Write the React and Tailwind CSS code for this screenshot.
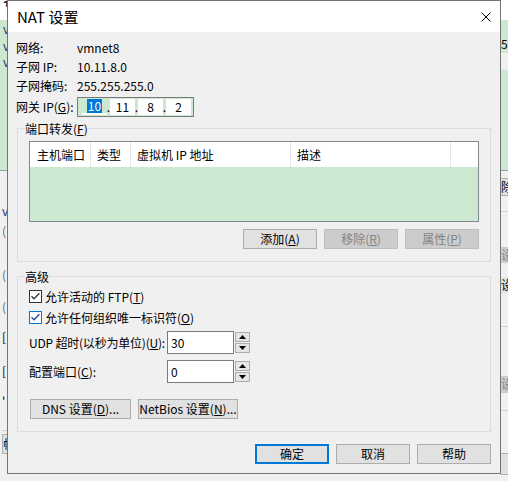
import React from "react";

function Btn({ children, className }) {
  return (
    <div className={"flex items-center justify-center h-[20px] text-[12px] leading-none whitespace-nowrap " + className}>
      {children}
    </div>
  );
}

function Check({ blue }) {
  return (
    <svg width="13" height="13" viewBox="0 0 13 13" className="shrink-0">
      <rect x="0.5" y="0.5" width="12" height="12" fill="white" stroke={blue ? "#0078d7" : "#333333"} />
      <path d="M2.5 6.2 L5 8.8 L10.4 3.3" fill="none" stroke={blue ? "#1b4f8a" : "#333333"} strokeWidth="1.3" />
    </svg>
  );
}

function Spin() {
  return (
    <div className="ml-[1px] flex flex-col gap-[1px] w-[15px]">
      <div className="h-[10px] bg-[#e5e5e5] border border-[#adadad] flex items-center justify-center">
        <svg width="7" height="4" viewBox="0 0 7 4"><path d="M0 4 L3.5 0 L7 4 Z" fill="#000" /></svg>
      </div>
      <div className="h-[10px] bg-[#e5e5e5] border border-[#adadad] flex items-center justify-center">
        <svg width="7" height="4" viewBox="0 0 7 4"><path d="M0 0 L7 0 L3.5 4 Z" fill="#000" /></svg>
      </div>
    </div>
  );
}

export default function App() {
  return (
    <div className="relative w-[508px] h-[481px] overflow-hidden bg-[#f0f0f0] text-black font-['Noto_Sans_CJK_SC',sans-serif] text-[12px]">
      {/* background window */}
      <div className="flex flex-col h-full">
        <div className="h-[20px] bg-white flex">
          <div className="w-[7px] overflow-hidden">
            <div className="pl-[3px] -mt-[7px] leading-[16px] whitespace-nowrap">名称</div>
          </div>
          <div className="flex-1"></div>
        </div>
        <div className="h-[150px] flex">
          <div className="w-[7px] overflow-hidden bg-[#cde8d0] pl-[3px] pt-[1px] flex flex-col leading-[16.5px] text-[#1a3a8a] whitespace-nowrap">
            <span>vm</span>
            <span>vm</span>
            <span>vm</span>
          </div>
          <div className="flex-1 bg-[#cde8d0]"></div>
          <div className="w-[7px] flex flex-col overflow-hidden">
            <div className="h-[33px] bg-[#cde8d0] flex items-end leading-[16px] pb-[1px] whitespace-nowrap">5.2</div>
            <div className="h-[17px] bg-[#f0f0f0]"></div>
            <div className="h-[100px] bg-[#cde8d0]"></div>
          </div>
        </div>
        <div className="flex-1 border-t border-[#a0a0a0] flex">
          <div className="w-[7px] overflow-hidden flex flex-col pl-[2px] text-[#6a6a6a]">
            <span className="mt-[33px] leading-[14px] text-[#1a3a8a]">v</span>
            <span className="mt-[6px] leading-[14px]">(</span>
            <span className="mt-[30px] leading-[14px]">(</span>
            <span className="mt-[18px] leading-[14px]">(</span>
            <span className="mt-[16px] leading-[14px] text-black">[</span>
            <span className="mt-[20px] leading-[14px] text-black">[</span>
            <span className="mt-[16px] leading-[14px] text-black">'</span>
            <div className="mt-[22px] border-t border-[#c8c8c8]"></div>
            <div className="mt-[3px] h-[20px] w-[12px] bg-[#e1e1e1] border border-[#adadad] text-black leading-[18px] overflow-hidden">帧</div>
          </div>
          <div className="flex-1"></div>
          <div className="w-[7px] flex flex-col overflow-hidden">
            <div className="mt-[7px] h-[18px] bg-[#e1e1e1] border-y border-[#adadad] leading-[16px] whitespace-nowrap">除</div>
            <div className="mt-[15px] border-t border-[#d0d0d0]"></div>
            <div className="mt-[35px] h-[16px] bg-[#cccccc] text-[#838383] leading-[16px] whitespace-nowrap">设</div>
            <div className="mt-[14px] h-[16px] bg-[#e1e1e1] leading-[16px] whitespace-nowrap">设</div>
            <div className="mt-[33px] border-t border-[#d0d0d0]"></div>
            <div className="mt-[49px] h-[17px] bg-[#cccccc] text-[#838383] leading-[16px] whitespace-nowrap">设</div>
            <div className="mt-[17px] border-t border-[#d0d0d0]"></div>
            <div className="mt-[42px] h-[22px] bg-[#e1e1e1] border-y border-[#adadad]"></div>
          </div>
        </div>
      </div>

      {/* NAT dialog */}
      <div className="absolute left-[7px] top-0 w-[494px] h-[474px] border border-[#747474] bg-[#f0f0f0] flex flex-col">
        <div className="h-[31px] shrink-0 bg-white flex items-center justify-between pl-[9px] pr-[9px]">
          <span className="text-[15px] leading-none">NAT 设置</span>
          <svg width="10" height="10" viewBox="0 0 10 10">
            <path d="M0.5 0.5 L9.5 9.5 M9.5 0.5 L0.5 9.5" stroke="#000" strokeWidth="1" />
          </svg>
        </div>

        <div className="flex flex-col pt-[6px]">
          <div className="h-[19px] pl-[8px] flex items-center">
            <span className="w-[61px]">网络:</span>
            <span>vmnet8</span>
          </div>
          <div className="h-[19px] pl-[8px] flex items-center">
            <span className="w-[61px]">子网 IP:</span>
            <span>10.11.8.0</span>
          </div>
          <div className="h-[19px] pl-[8px] flex items-center">
            <span className="w-[61px]">子网掩码:</span>
            <span>255.255.255.0</span>
          </div>
          <div className="mt-[2px] h-[20px] pl-[8px] flex items-center">
            <span className="w-[61px] whitespace-nowrap">网关 IP(<u>G</u>):</span>
            <div className="w-[117px] h-[20px] border border-[#7a7a7a] bg-[#cde8d0] flex items-center pl-[4px]">
              <div className="w-[25px] h-[16px] flex items-center justify-center border-b-2 border-white">
                <span className="bg-[#0078d7] text-white leading-[14px] px-[1px]">10</span>
              </div>
              <div className="w-[3px] flex justify-center">.</div>
              <div className="w-[25px] h-[16px] bg-white flex items-center justify-center">11</div>
              <div className="w-[3px] flex justify-center">.</div>
              <div className="w-[25px] h-[16px] bg-white flex items-center justify-center">8</div>
              <div className="w-[3px] flex justify-center">.</div>
              <div className="w-[25px] h-[16px] bg-white flex items-center justify-center">2</div>
            </div>
          </div>

          <fieldset className="mx-[9px] mt-[3px] border border-[#dcdcdc]">
            <legend className="ml-[7px] leading-[17px]">端口转发(<u>F</u>)</legend>
            <div className="px-[11px] pt-[4px] pb-[12px] flex flex-col">
              <div className="h-[81px] border border-[#828790] bg-[#cde8d0] flex flex-col">
                <div className="h-[25px] bg-white flex">
                  <div className="w-[61px] border-r border-[#e5e5e5] pl-[7px] flex items-center">主机端口</div>
                  <div className="w-[40px] border-r border-[#e5e5e5] pl-[6px] flex items-center">类型</div>
                  <div className="w-[160px] border-r border-[#e5e5e5] pl-[6px] flex items-center">虚拟机 IP 地址</div>
                  <div className="w-[160px] border-r border-[#e5e5e5] pl-[6px] flex items-center">描述</div>
                  <div className="flex-1"></div>
                </div>
              </div>
              <div className="mt-[7px] flex justify-end gap-[7px]">
                <Btn className="w-[74px] bg-[#e1e1e1] border border-[#adadad]">添加(<u>A</u>)</Btn>
                <Btn className="w-[74px] bg-[#cccccc] border border-[#bfbfbf] text-[#838383]">移除(<u>R</u>)</Btn>
                <Btn className="w-[74px] bg-[#cccccc] border border-[#bfbfbf] text-[#838383]">属性(<u>P</u>)</Btn>
              </div>
            </div>
          </fieldset>

          <fieldset className="mx-[9px] mt-[6px] border border-[#dcdcdc]">
            <legend className="ml-[7px] leading-[17px]">高级</legend>
            <div className="px-[11px] pb-[12px] flex flex-col">
              <div className="mt-[1px] h-[21px] flex items-center gap-[3px]">
                <Check />
                <span>允许活动的 FTP(<u>T</u>)</span>
              </div>
              <div className="h-[21px] flex items-center gap-[3px]">
                <Check blue />
                <span>允许任何组织唯一标识符(<u>O</u>)</span>
              </div>
              <div className="mt-[3px] h-[23px] flex items-center">
                <span className="w-[138px] whitespace-nowrap tracking-[-0.2px]">UDP 超时(以秒为单位)(<u>U</u>):</span>
                <div className="w-[67px] h-[23px] border border-[#7a7a7a] bg-white pl-[3px] flex items-center">30</div>
                <Spin />
              </div>
              <div className="mt-[6px] h-[23px] flex items-center">
                <span className="w-[138px] whitespace-nowrap">配置端口(<u>C</u>):</span>
                <div className="w-[67px] h-[23px] border border-[#7a7a7a] bg-white pl-[3px] flex items-center">0</div>
                <Spin />
              </div>
              <div className="mt-[16px] ml-[1px] flex gap-[7px]">
                <Btn className="w-[101px] bg-[#e1e1e1] border border-[#adadad]">DNS 设置(<u>D</u>)...</Btn>
                <Btn className="w-[100px] bg-[#e1e1e1] border border-[#adadad]">NetBios 设置(<u>N</u>)...</Btn>
              </div>
            </div>
          </fieldset>

          <div className="mt-[12px] pr-[9px] flex justify-end gap-[7px]">
            <Btn className="w-[74px] bg-[#e1e1e1] border-2 border-[#0078d7]">确定</Btn>
            <Btn className="w-[74px] bg-[#e1e1e1] border border-[#adadad]">取消</Btn>
            <Btn className="w-[74px] bg-[#e1e1e1] border border-[#adadad]">帮助</Btn>
          </div>
        </div>
      </div>
    </div>
  );
}
